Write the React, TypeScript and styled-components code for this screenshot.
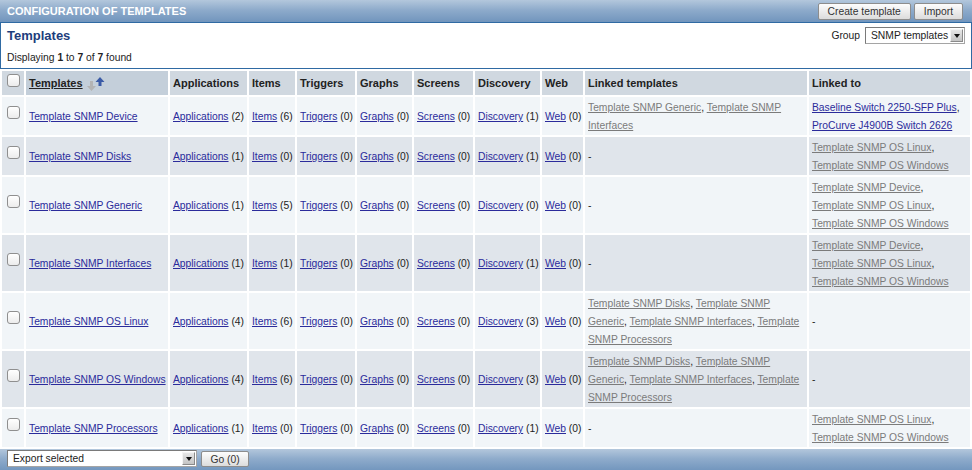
import React from "react";
import styled, { createGlobalStyle } from "styled-components";

const GlobalStyle = createGlobalStyle`
  * { box-sizing: border-box; }
  body {
    margin: 0;
    background: #ffffff;
    color: #222;
    font-family: "Liberation Sans", Arial, sans-serif;
    font-size: 10.3px;
  }
`;

type Row = {
  name: string;
  apps: number;
  items: number;
  triggers: number;
  graphs: number;
  screens: number;
  discovery: number;
  web: number;
  linkedTemplates: string[];
  linkedTo: { label: string; host?: boolean }[];
};

const rows: Row[] = [
  {
    name: "Template SNMP Device",
    apps: 2, items: 6, triggers: 0, graphs: 0, screens: 0, discovery: 1, web: 0,
    linkedTemplates: ["Template SNMP Generic", "Template SNMP Interfaces"],
    linkedTo: [
      { label: "Baseline Switch 2250-SFP Plus", host: true },
      { label: "ProCurve J4900B Switch 2626", host: true },
    ],
  },
  {
    name: "Template SNMP Disks",
    apps: 1, items: 0, triggers: 0, graphs: 0, screens: 0, discovery: 1, web: 0,
    linkedTemplates: [],
    linkedTo: [{ label: "Template SNMP OS Linux" }, { label: "Template SNMP OS Windows" }],
  },
  {
    name: "Template SNMP Generic",
    apps: 1, items: 5, triggers: 0, graphs: 0, screens: 0, discovery: 0, web: 0,
    linkedTemplates: [],
    linkedTo: [
      { label: "Template SNMP Device" },
      { label: "Template SNMP OS Linux" },
      { label: "Template SNMP OS Windows" },
    ],
  },
  {
    name: "Template SNMP Interfaces",
    apps: 1, items: 1, triggers: 0, graphs: 0, screens: 0, discovery: 1, web: 0,
    linkedTemplates: [],
    linkedTo: [
      { label: "Template SNMP Device" },
      { label: "Template SNMP OS Linux" },
      { label: "Template SNMP OS Windows" },
    ],
  },
  {
    name: "Template SNMP OS Linux",
    apps: 4, items: 6, triggers: 0, graphs: 0, screens: 0, discovery: 3, web: 0,
    linkedTemplates: [
      "Template SNMP Disks",
      "Template SNMP Generic",
      "Template SNMP Interfaces",
      "Template SNMP Processors",
    ],
    linkedTo: [],
  },
  {
    name: "Template SNMP OS Windows",
    apps: 4, items: 6, triggers: 0, graphs: 0, screens: 0, discovery: 3, web: 0,
    linkedTemplates: [
      "Template SNMP Disks",
      "Template SNMP Generic",
      "Template SNMP Interfaces",
      "Template SNMP Processors",
    ],
    linkedTo: [],
  },
  {
    name: "Template SNMP Processors",
    apps: 1, items: 0, triggers: 0, graphs: 0, screens: 0, discovery: 1, web: 0,
    linkedTemplates: [],
    linkedTo: [{ label: "Template SNMP OS Linux" }, { label: "Template SNMP OS Windows" }],
  },
];

const barGradient = `linear-gradient(to bottom, #b3c7dc 0%, #8eabcb 45%, #7195bd 100%)`;

const TitleBar = styled.div`
  height: 22px;
  display: flex;
  align-items: center;
  justify-content: space-between;
  padding: 0 9px 0 7px;
  background: ${barGradient};
`;

const Title = styled.div`
  color: #ffffff;
  font-weight: bold;
  font-size: 11px;
  text-transform: uppercase;
`;

const ButtonGroup = styled.div`
  display: flex;
  gap: 3px;
`;

const Button = styled.button`
  height: 17px;
  padding: 0 9px;
  font-family: inherit;
  font-size: 10.3px;
  color: #333;
  border: 1px solid #8d8d8d;
  border-radius: 2px;
  background: linear-gradient(to bottom, #fdfdfd, #dcdcdc);
  cursor: pointer;
`;

const Box = styled.div`
  height: 47px;
  border: 1px solid #2f6aa3;
  padding: 3px 6px 1px 6px;
  display: flex;
  flex-direction: column;
  gap: 2px;
`;

const TopRow = styled.div`
  height: 21px;
  display: flex;
  align-items: center;
  justify-content: space-between;
`;

const BoxTitle = styled.div`
  font-size: 13px;
  font-weight: bold;
  color: #1d3d7c;
`;

const Filter = styled.div`
  display: flex;
  align-items: center;
  gap: 5px;
`;

const Info = styled.div`
  line-height: 18px;
  padding-top: 2px;
`;

const FakeSelect = styled.div<{ $w: number }>`
  width: ${(p) => p.$w}px;
  height: 17px;
  display: flex;
  align-items: center;
  justify-content: space-between;
  padding: 0 1px 0 5px;
  background: #ffffff;
  border: 1px solid #a5a5a5;
  border-top-color: #7a7a7a;
  border-left-color: #7a7a7a;
  color: #222;
`;

const SelectArrow = styled.span`
  width: 13px;
  height: 13px;
  display: flex;
  align-items: center;
  justify-content: center;
  background: linear-gradient(to bottom, #e6e6e6, #c4c4c4);
  border: 1px solid #8a8a8a;
  border-top-color: #f4f4f4;
  border-left-color: #f4f4f4;

  &::after {
    content: "";
    border-left: 3px solid transparent;
    border-right: 3px solid transparent;
    border-top: 4px solid #111;
  }
`;

const Table = styled.table`
  width: 100%;
  table-layout: fixed;
  border-collapse: separate;
  border-spacing: 2px;
`;

const Col = styled.col<{ $w: number }>`
  width: ${(p) => p.$w}px;
`;

const Th = styled.th<{ $sorted?: boolean }>`
  padding: 3px;
  line-height: 18px;
  text-align: left;
  font-size: 11px;
  font-weight: bold;
  color: #222;
  white-space: nowrap;
  background: ${(p) => (p.$sorted ? "#c4cfda" : "#d0d8e0")};
`;

const CheckTh = styled(Th)`
  padding: 0 3px 6px;
  text-align: center;
  vertical-align: middle;
`;

const Td = styled.td<{ $odd: boolean }>`
  padding: 2px 3px 0;
  line-height: 18px;
  vertical-align: middle;
  background: ${(p) => (p.$odd ? "#f1f5f8" : "#e0e5eb")};
  white-space: nowrap;
`;

const WrapTd = styled(Td)`
  white-space: normal;
`;

const CheckTd = styled(Td)`
  padding: 1px 3px 8px;
  text-align: center;
`;

const Checkbox = styled.input.attrs({ type: "checkbox" })`
  appearance: none;
  display: block;
  margin: 0 auto;
  width: 13px;
  height: 13px;
  border: 1px solid #8f8f8f;
  border-radius: 3px;
  background: linear-gradient(to bottom, #ffffff, #ececec);
`;

const HeadLink = styled.a`
  color: #222;
  text-decoration: underline;
`;

const Link = styled.a<{ $muted?: boolean }>`
  color: ${(p) => (p.$muted ? "#7b7b7b" : "#2b2b9b")};
  text-decoration: underline;
  cursor: pointer;
`;

const SortIcon = styled.svg`
  margin-left: 4px;
  vertical-align: middle;
`;

const Footer = styled.div`
  height: 22px;
  display: flex;
  align-items: flex-start;
  gap: 4px;
  padding: 1px 7px 0;
  background: ${barGradient};
`;

const GoButton = styled(Button)`
  height: 16px;
  width: 48px;
  margin-top: 1px;
  padding: 0;
`;

const Counted = ({ label, n }: { label: string; n: number }) => (
  <>
    <Link>{label}</Link> ({n})
  </>
);

const LinkList = ({ items }: { items: { label: string; host?: boolean }[] }) =>
  items.length === 0 ? (
    <>-</>
  ) : (
    <>
      {items.map((it, i) => (
        <React.Fragment key={it.label}>
          <Link $muted={!it.host}>{it.label}</Link>
          {i < items.length - 1 ? ", " : ""}
        </React.Fragment>
      ))}
    </>
  );

const widths = [22, 142, 77, 46, 58, 55, 59, 65, 41, 222, 161];

export default function App() {
  return (
    <>
      <GlobalStyle />
      <TitleBar>
        <Title>Configuration of templates</Title>
        <ButtonGroup>
          <Button>Create template</Button>
          <Button>Import</Button>
        </ButtonGroup>
      </TitleBar>
      <Box>
        <TopRow>
          <BoxTitle>Templates</BoxTitle>
          <Filter>
            Group
            <FakeSelect $w={100}>
              SNMP templates
              <SelectArrow />
            </FakeSelect>
          </Filter>
        </TopRow>
        <Info>
          Displaying <b>1</b> to <b>7</b> of <b>7</b> found
        </Info>
      </Box>
      <Table>
        <colgroup>
          {widths.map((w, i) => (
            <Col key={i} $w={w} />
          ))}
        </colgroup>
        <thead>
          <tr>
            <CheckTh>
              <Checkbox />
            </CheckTh>
            <Th $sorted>
              <HeadLink>Templates</HeadLink>
              <SortIcon width="18" height="14" viewBox="0 0 18 14">
                <path d="M3 4h3v5h3l-4.5 5L0 9h3z" fill="#b4b4b4" />
                <path d="M11.5 9V5H8.5L13 0l4.5 5h-3v4z" fill="#3b5ba6" />
              </SortIcon>
            </Th>
            <Th>Applications</Th>
            <Th>Items</Th>
            <Th>Triggers</Th>
            <Th>Graphs</Th>
            <Th>Screens</Th>
            <Th>Discovery</Th>
            <Th>Web</Th>
            <Th>Linked templates</Th>
            <Th>Linked to</Th>
          </tr>
        </thead>
        <tbody>
          {rows.map((r, i) => {
            const odd = i % 2 === 0;
            return (
              <tr key={r.name}>
                <CheckTd $odd={odd}>
                  <Checkbox />
                </CheckTd>
                <Td $odd={odd}>
                  <Link>{r.name}</Link>
                </Td>
                <Td $odd={odd}>
                  <Counted label="Applications" n={r.apps} />
                </Td>
                <Td $odd={odd}>
                  <Counted label="Items" n={r.items} />
                </Td>
                <Td $odd={odd}>
                  <Counted label="Triggers" n={r.triggers} />
                </Td>
                <Td $odd={odd}>
                  <Counted label="Graphs" n={r.graphs} />
                </Td>
                <Td $odd={odd}>
                  <Counted label="Screens" n={r.screens} />
                </Td>
                <Td $odd={odd}>
                  <Counted label="Discovery" n={r.discovery} />
                </Td>
                <Td $odd={odd}>
                  <Counted label="Web" n={r.web} />
                </Td>
                <WrapTd $odd={odd}>
                  <LinkList items={r.linkedTemplates.map((label) => ({ label }))} />
                </WrapTd>
                <WrapTd $odd={odd}>
                  <LinkList items={r.linkedTo} />
                </WrapTd>
              </tr>
            );
          })}
        </tbody>
      </Table>
      <Footer>
        <FakeSelect $w={190}>
          Export selected
          <SelectArrow />
        </FakeSelect>
        <GoButton>Go (0)</GoButton>
      </Footer>
    </>
  );
}
